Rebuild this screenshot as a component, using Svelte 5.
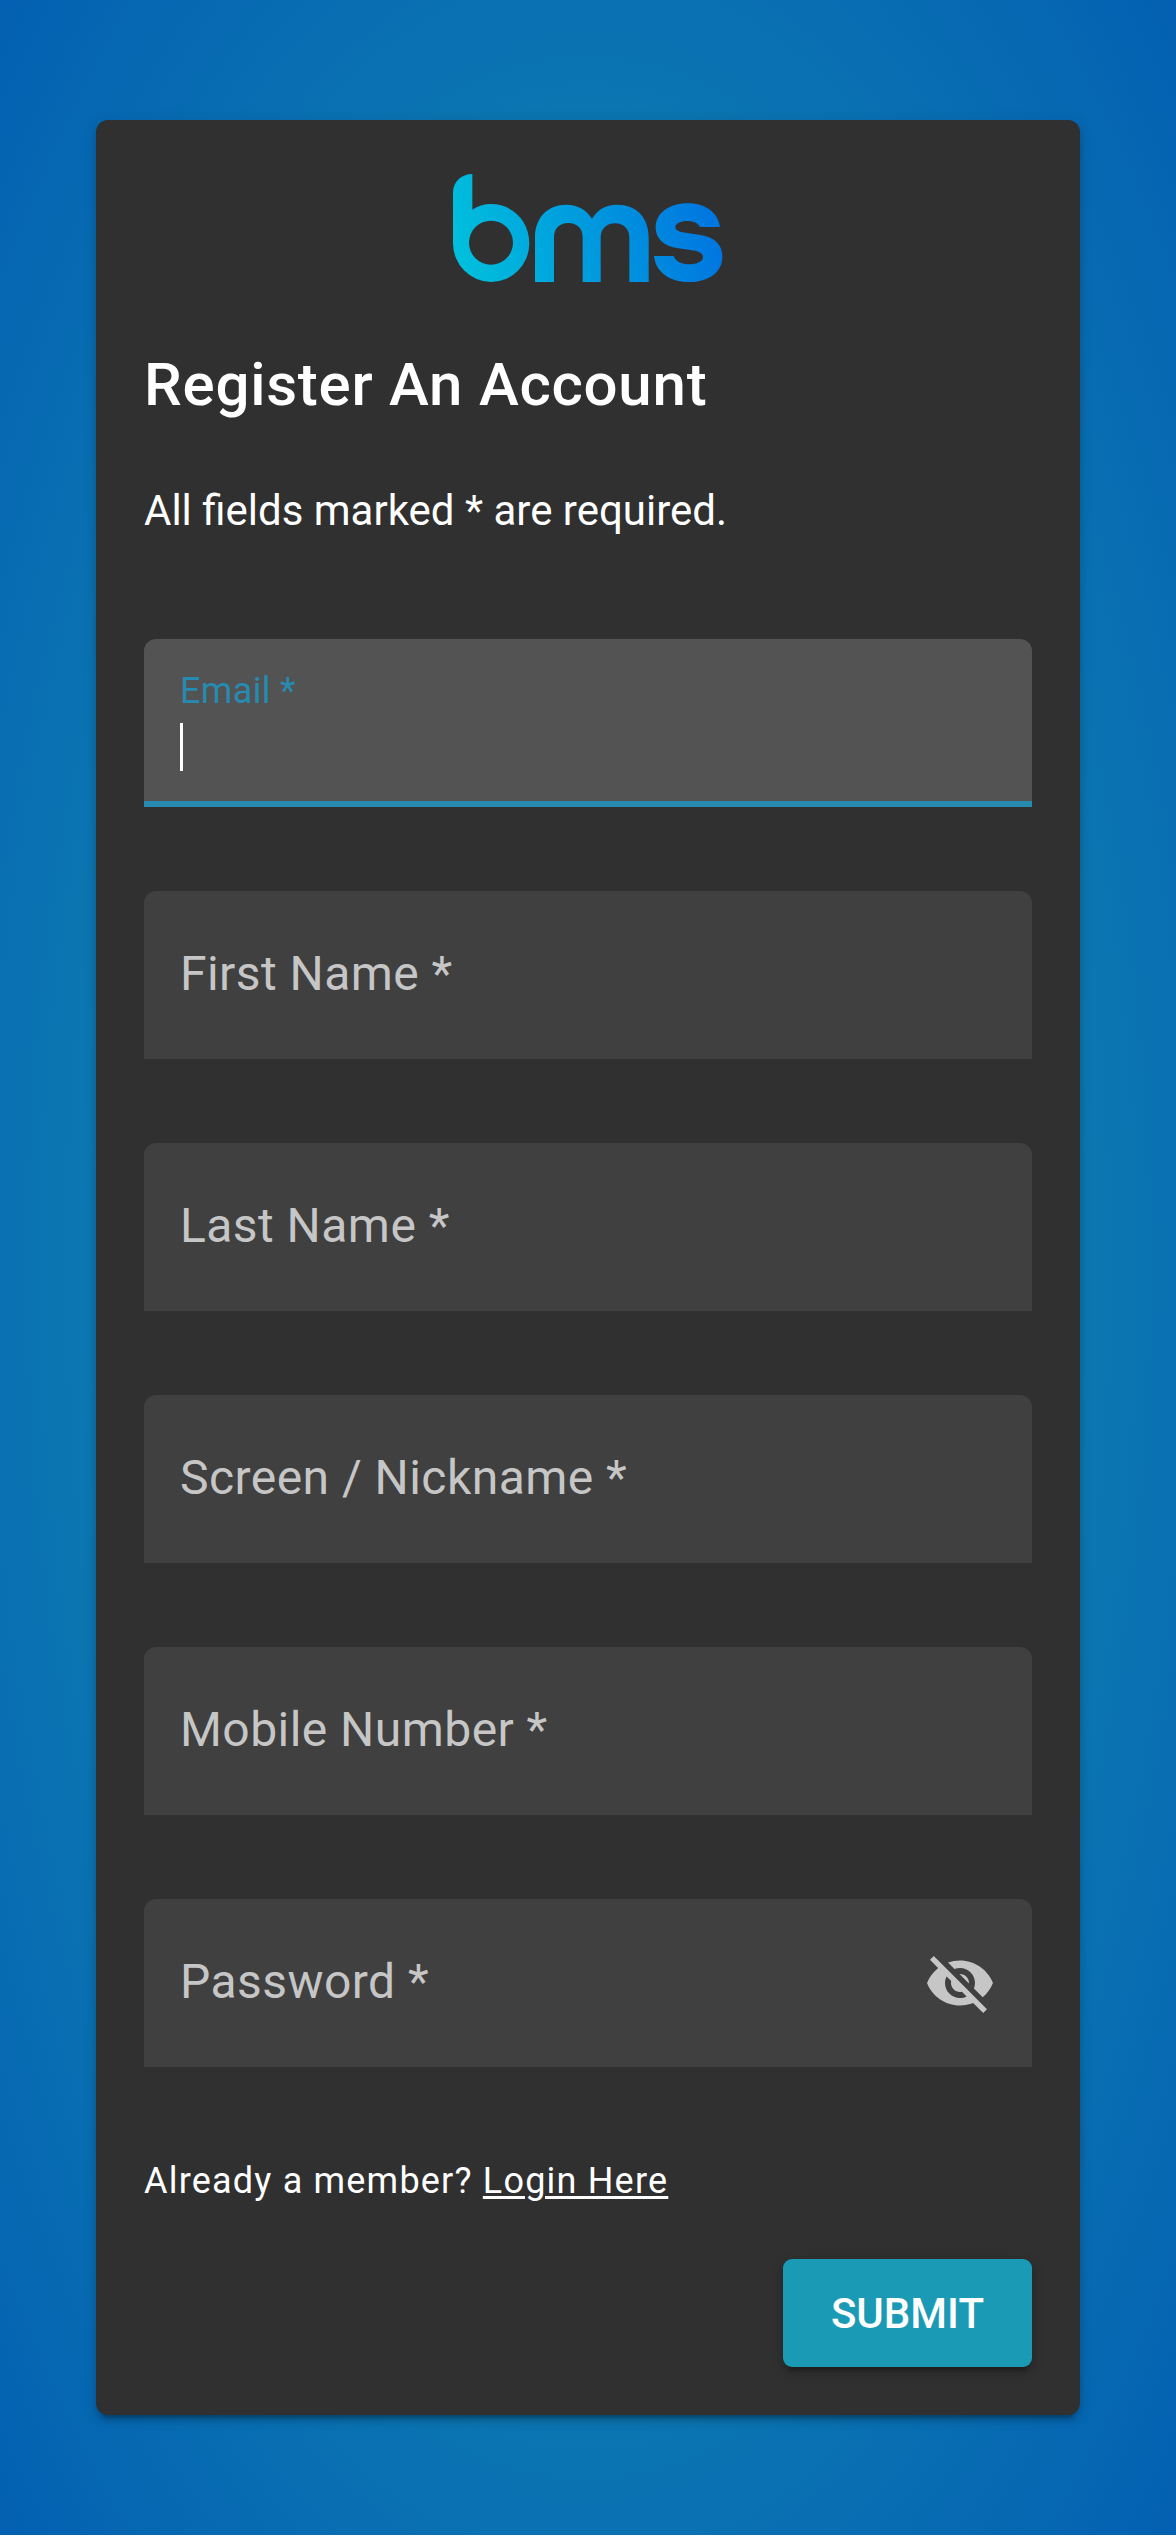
<script>
  const fields = [
    { label: 'Email *', focused: true },
    { label: 'First Name *' },
    { label: 'Last Name *' },
    { label: 'Screen / Nickname *' },
    { label: 'Mobile Number *' },
    { label: 'Password *', icon: true }
  ];
</script>

<main class="page">
  <section class="card">
    <svg class="logo" viewBox="40 42 810 324" role="img" aria-label="bms">
      <defs>
        <linearGradient id="brand" gradientUnits="userSpaceOnUse" x1="70" y1="330" x2="810" y2="130">
          <stop offset="0" stop-color="#00bfdc" />
          <stop offset="1" stop-color="#0076e0" />
        </linearGradient>
      </defs>
      <g fill="url(#brand)" fill-rule="evenodd">
        <path d="M98 42C65 42 40 66 40 98V249A114.500 117 0 0 0 269 249C269 184 219 132 154 132C133 132 114 138 98 149ZM154 182A66 66 0 1 1 154 314A66 66 0 1 1 154 182Z" />
        <path d="M286 366V232C286 172 325 134 380 134C415 134 441 150 457 176C473 150 496 134 532 134C590 134 627 172 627 232V366H569V232C569 207 552 190 526 190C500 190 483 207 483 232V366H429V232C429 205 412 189 386 189C360 189 343 205 343 232V366Z" />
        <path d="M841 201H781C775 190 762 183 743 183C722 183 707 191 707 201C707 212 722 216 742 219L778 224C825 231 848 253 848 290C848 336 808 366 748 366C688 366 648 335 643 288H702C708 304 725 313 748 313C772 313 790 305 790 292C790 280 778 274 757 271L716 265C672 258 648 235 648 203C648 160 688 130 744 130C800 130 836 160 841 201Z" />
      </g>
    </svg>
    <h2>Register An Account</h2>
    <p class="note">All fields marked * are required.</p>

    <div class="fields">
      {#each fields as field}
        <div class="field" class:focused={field.focused}>
          <span class="label">{field.label}</span>
          {#if field.focused}<span class="caret"></span>{/if}
          {#if field.icon}
            <svg class="eye" viewBox="0 0 24 24" aria-hidden="true">
              <path d="M12 7c2.760 0 5 2.240 5 5 0 .65-.13 1.260-.36 1.830l2.920 2.920c1.510-1.260 2.700-2.890 3.430-4.750-1.730-4.390-6-7.500-11-7.500-1.400 0-2.740.25-3.980.7l2.160 2.160C10.740 7.130 11.350 7 12 7zM2 4.270l2.280 2.280.46.46C3.080 8.300 1.780 10.020 1 12c1.730 4.390 6 7.500 11 7.500 1.550 0 3.030-.3 4.380-.84l.42.42L19.730 22 21 20.730 3.270 3 2 4.270zM7.530 9.800l1.550 1.550c-.05.21-.08.43-.08.65 0 1.660 1.340 3 3 3 .22 0 .44-.03.65-.08l1.550 1.550c-.67.33-1.410.53-2.200.53-2.760 0-5-2.240-5-5 0-.79.2-1.530.53-2.200zm4.310-.78l3.150 3.150.02-.16c0-1.660-1.340-3-3-3l-.17.010z" />
            </svg>
          {/if}
        </div>
      {/each}
    </div>

    <p class="member">Already a member? <a href="#login">Login Here</a></p>
    <button type="button">SUBMIT</button>
  </section>
</main>

<style>
  :global(body) {
    margin: 0;
    background: #fff;
  }
  .page {
    box-sizing: border-box;
    height: 2535px;
    padding: 120px 96px;
    background: radial-gradient(ellipse farthest-corner, #1a9ab1 0%, #0360b2 100%);
    font-family: Roboto, 'Liberation Sans', sans-serif;
    color: #fff;
  }
  .card {
    box-sizing: border-box;
    height: 2295px;
    padding: 54px 48px 48px;
    display: flex;
    flex-direction: column;
    border-radius: 12px;
    background: #303030;
    box-shadow:
      0 9px 3px -6px rgba(0, 0, 0, 0.2),
      0 6px 6px rgba(0, 0, 0, 0.14),
      0 3px 15px rgba(0, 0, 0, 0.12);
  }
  .logo {
    width: 270px;
    height: 108px;
    align-self: center;
  }
  h2 {
    margin: 55px 0 0;
    font-size: 60px;
    line-height: 96px;
    font-weight: 500;
    letter-spacing: 0.75px;
  }
  .note {
    margin: 48px 0 98px;
    font-size: 42px;
    line-height: 60px;
  }
  .fields {
    display: flex;
    flex-direction: column;
    gap: 84px;
  }
  .field {
    box-sizing: border-box;
    height: 168px;
    padding: 0 36px;
    display: flex;
    align-items: center;
    justify-content: space-between;
    border-radius: 12px 12px 0 0;
    background: #404040;
    color: #c6c6c6;
    font-size: 48px;
    letter-spacing: 0.45px;
  }
  .label {
    padding-bottom: 3px;
  }
  .focused {
    flex-direction: column;
    align-items: flex-start;
    justify-content: flex-start;
    padding-top: 31px;
    border-bottom: 6px solid #278ab0;
    background: #535353;
    color: #278ab0;
    font-size: 36px;
    line-height: 42px;
    letter-spacing: 0.34px;
  }
  .focused .label {
    padding: 0;
  }
  .caret {
    width: 3px;
    height: 48px;
    margin-top: 11px;
    background: #fff;
  }
  .eye {
    width: 72px;
    height: 72px;
    fill: #c6c6c6;
  }
  .member {
    margin: 84px 0 48px;
    font-size: 36px;
    line-height: 60px;
    letter-spacing: 1.2px;
  }
  a {
    color: inherit;
    text-decoration: underline;
    text-decoration-thickness: 3px;
    text-underline-offset: 3px;
  }
  button {
    height: 108px;
    padding: 2px 48px 0;
    align-self: flex-end;
    border: 0;
    border-radius: 9px;
    background: #1a9ab5;
    color: #fff;
    font: 500 42px/106px Roboto, 'Liberation Sans', sans-serif;
    box-shadow:
      0 9px 3px -6px rgba(0, 0, 0, 0.2),
      0 6px 6px rgba(0, 0, 0, 0.14),
      0 3px 15px rgba(0, 0, 0, 0.12);
  }
</style>
